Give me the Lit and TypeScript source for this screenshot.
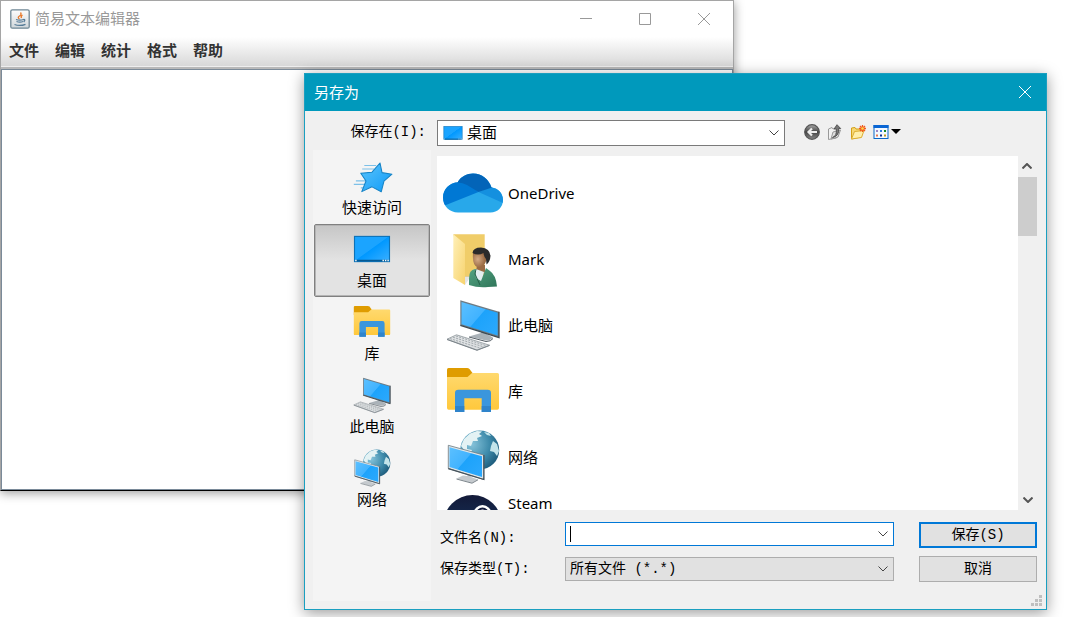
import { LitElement, html, css, svg } from "lit";
import { customElement, state } from "lit/decorators.js";

const art: Record<string, unknown> = {
  quick: svg`
    <defs><linearGradient id="star" x1="0" y1="0" x2="1" y2="1"><stop offset="0" stop-color="#5cc4fb"/><stop offset="1" stop-color="#0f9bf8"/></linearGradient></defs>
    <g stroke="#7cc0e8" stroke-width="1.6" fill="none"><path d="M19 15H36M16 20H33M23 25H30M7 37H22M4 42H20M14 47H18"/></g>
    <path d="M41.4 11.4L44.3 25.2L58.5 27.4L47.1 37.3L43.2 52.6L30 45.5L15.4 52.3L21.4 37.1L14 26L30 24.5Z" fill="url(#star)" stroke="#1583c6" stroke-width="1.5" stroke-linejoin="round"/>`,
  desktop: svg`
    <defs><linearGradient id="desk" x1="0" y1="0" x2="1" y2="1"><stop offset="0" stop-color="#1ba4ff"/><stop offset=".48" stop-color="#1ba4ff"/><stop offset=".5" stop-color="#0098ff"/><stop offset="1" stop-color="#3cb0ff"/></linearGradient></defs>
    <rect x="5" y="12" width="50" height="36" fill="url(#desk)" stroke="#0c72b8" stroke-width="1.6"/>
    <path d="M6 46.5H54" stroke="#075a93" stroke-width="2.2"/><path d="M6 46.5h2M45 46.5h2M48.500 46.500h2M52 46.500h2" stroke="#fff" stroke-width="2"/>`,
  library: svg`
    <defs><linearGradient id="lib" x1="0" y1="0" x2="0" y2="1"><stop offset="0" stop-color="#ffd96e"/><stop offset="1" stop-color="#ffc83c"/></linearGradient></defs>
    <path d="M5.500 7H24q1.500 0 2.500 1l3 4-3 8H4V8.500Q4 7 5.500 7z" fill="#df9c00"/>
    <path d="M4 16H24.500L29 12H54.500Q56 12 56 13.500V47q0 1.700-1.700 1.700H5.700Q4 48.700 4 47z" fill="url(#lib)"/>
    <path d="M12 51V32q0-3.300 3.300-3.300H44.700Q48 28.700 48 32V51H38.700V37.300H21.300V51z" fill="#3a96dd"/>
    <path d="M12 45h9.300v6H12zM38.700 45H48v6h-9.300z" fill="#2f84cb"/>`,
  computer: svg`
    <defs><linearGradient id="pc" x1="0" y1="0" x2="1" y2=".8"><stop offset="0" stop-color="#5cc0ff"/><stop offset=".5" stop-color="#41b3ff"/><stop offset=".52" stop-color="#1da3fb"/><stop offset="1" stop-color="#2aa8fd"/></linearGradient></defs>
    <path d="M26 41.500L38 38l1-3 4.500 1v3l6.500 3.500q-2 3-7 3z" fill="#aab2b8"/><path d="M26 42L43 46.500q5 0 7-3" stroke="#555e66" fill="none"/>
    <path d="M17.300 5.300L56 16.700V42.500L17.300 30.300z" fill="#6d7b84"/>
    <path d="M18.500 7L54.700 17.700V40.500L18.500 29.200z" fill="url(#pc)"/>
    <path d="M56 16.700V42.500L17.300 30.300" fill="none" stroke="#3e4a52" stroke-width="1.300"/>
    <path d="M4 44.200L13.500 39.800L46.500 50.200L34 55z" fill="#dde0e2" stroke="#8d959b" stroke-width=".8"/>
    <path d="M7 43.600L38 53.400M10 42.200L41 52M13 41L43.500 50.800" stroke="#a3aaae" stroke-width="1" stroke-dasharray="2 1.200"/>
    <path d="M4 44.500L34 55.300L46.500 50.500" fill="none" stroke="#7b848a"/>`,
  network: svg`
    <defs><radialGradient id="globe" cx=".3" cy=".35" r=".75"><stop offset="0" stop-color="#86c3da"/><stop offset=".6" stop-color="#3e8bab"/><stop offset="1" stop-color="#1e5c7c"/></radialGradient>
    <linearGradient id="net" x1="0" y1="0" x2="1" y2=".8"><stop offset="0" stop-color="#5cc0ff"/><stop offset=".5" stop-color="#41b3ff"/><stop offset=".52" stop-color="#1da3fb"/><stop offset="1" stop-color="#2aa8fd"/></linearGradient></defs>
    <circle cx="36.700" cy="23" r="19.500" fill="url(#globe)"/>
    <path d="M18 19L21 12L27 6.500L34 4L39 4.500L36 7L39 9L34 11L35 14L30 14L28 19L24 18L24 22L29 23L27 27L22 24z" fill="#e3f2f4"/>
    <path d="M41 5L46 6L48 9L44 8zM50 14L54 17L56 24L54 29L51 25L47 24L48 19zM29 25l3 1-1 3-3-2z" fill="#c3e4ea"/>
    <path d="M13.500 51.500L20 48.500l4 .5 1-3 3 1v3l7 2.500-6 3.500z" fill="#c5cace"/><path d="M13.500 52L29 56.200L35 52.800" stroke="#7c858b" fill="none"/>
    <path d="M5.300 18.300L40.700 28V52.500L5.300 41.500z" fill="#dfe6e9" stroke="#6b7880" stroke-width=".8"/>
    <path d="M6.500 20.200L39 29.200V50L6.500 40z" fill="url(#net)"/><path d="M40.900 28V52.500L5.300 41.600" fill="none" stroke="#45525b" stroke-width="1.200"/>`,
  onedrive: svg`
    <defs><clipPath id="cloud"><path d="M14.500 19.500C18 13.500 24 10.500 30 10.500C39 10.500 46 16.500 48.500 24.500C55 25 60 30.500 60 37C60 44 54.500 49.500 47.500 49.500H15C6.500 49.500 0 43 0 34.500C0 26.500 6.500 19.500 14.500 19.500z"/></clipPath></defs>
    <g clip-path="url(#cloud)"><path d="M0 0H60V60H0z" fill="#28a8ea"/><path d="M0 10H14L35.500 29L3 42H0z" fill="#0078d4"/>
    <path d="M35.500 29L47 24L60 22V40z" fill="#1490df"/><path d="M11 8H52V23.500L35.500 29L24 22Q18 18.500 12 19.700z" fill="#0364b8"/></g>`,
  user: svg`
    <defs><linearGradient id="flap" x1="0" y1="0" x2="1" y2="1"><stop offset="0" stop-color="#fff0b8"/><stop offset="1" stop-color="#f7d36e"/></linearGradient>
    <radialGradient id="face" cx=".35" cy=".5"><stop offset="0" stop-color="#d5ab85"/><stop offset="1" stop-color="#9a6b44"/></radialGradient>
    <linearGradient id="coat" x1="0" y1="0" x2="1" y2="1"><stop offset="0" stop-color="#55a583"/><stop offset="1" stop-color="#2f7559"/></linearGradient></defs>
    <path d="M10.300 5.300H41.700V48H20z" fill="#f0cd69"/><path d="M10.300 5.300L22 15V56L10.300 49z" fill="url(#flap)"/><path d="M22 56l4-6V47H22z" fill="#ccc" opacity=".5"/>
    <path d="M34 36h8v7l-5 5-4-5z" fill="#9a6b44"/>
    <path d="M33 40l-3 1v14h8l3-12z" fill="#e4eef0"/>
    <path d="M32 40Q26 41 26 49V56Q35 59 45 58L54 57.500Q53 46 47 42L43 39L38 52L33 49z" fill="url(#coat)"/><path d="M33 40L32 45L37 56" stroke="#26624a" fill="none"/>
    <path d="M30 24Q29 37 35 38.500Q41 39 44 30L43 22z" fill="url(#face)"/>
    <path d="M29.500 24Q30 18.500 38 18.500Q47 19 47.500 27Q47 33 43.500 35.500L43 30Q41 28 40.500 24Q35 27 29.500 24z" fill="#2b2b2b"/>`,
  steam: svg`
    <defs><linearGradient id="steam" x1="0" y1="0" x2="0" y2="1"><stop offset="0" stop-color="#131a38"/><stop offset="1" stop-color="#17406f"/></linearGradient></defs>
    <circle cx="29.500" cy="31" r="29" fill="url(#steam)"/><circle cx="39.500" cy="21" r="9" fill="#fff"/><circle cx="39.500" cy="21" r="6.500" fill="#131b3c"/><circle cx="39.500" cy="21" r="4.500" fill="#fff"/>`,
};

const picture = (name: string, cls: string) =>
  html`<svg class=${cls} viewBox="0 0 60 60" aria-hidden="true">${art[name]}</svg>`;

const chevron = html`<svg class="chevron" viewBox="0 0 10 6" aria-hidden="true"><path d="M.5 .5L5 5L9.500 .5" /></svg>`;

const cross = html`<svg class="sign" viewBox="0 0 12 12" aria-hidden="true"><path d="M0 0L12 12M12 0L0 12" /></svg>`;

@customElement("app-root")
export class AppRoot extends LitElement {
  @state() private place = "desktop";

  private menus = ["文件", "编辑", "统计", "格式", "帮助"];
  private places = [
    { id: "quick", name: "快速访问" },
    { id: "desktop", name: "桌面" },
    { id: "library", name: "库" },
    { id: "computer", name: "此电脑" },
    { id: "network", name: "网络" },
  ];
  private entries = [
    { id: "onedrive", name: "OneDrive" },
    { id: "user", name: "Mark" },
    { id: "computer", name: "此电脑" },
    { id: "library", name: "库" },
    { id: "network", name: "网络" },
    { id: "steam", name: "Steam", tall: true },
  ];

  static styles = css`
    :host {
      display: block;
      position: relative;
      height: 100vh;
      overflow: hidden;
      background: #fff;
      color: #000;
      font: 15px/20px "Noto Sans", "Noto Sans CJK SC", sans-serif;
    }
    * { box-sizing: border-box; }
    button, input, select, textarea {
      margin: 0;
      padding: 0;
      border: 0;
      border-radius: 0;
      outline: 0;
      background: none;
      color: inherit;
      font: inherit;
      appearance: none;
      min-width: 0;
    }
    .window { position: absolute; display: flex; flex-direction: column; }
    .titlebar { display: flex; align-items: stretch; }
    .caption { flex: 1; margin: 0; font: inherit; align-self: center; }
    .controls { display: flex; }
    .winbtn { display: grid; place-items: center; }
    .sign { width: 12px; height: 12px; fill: none; stroke: currentColor; overflow: visible; }

    .editor {
      inset: 0 332px 126px 0;
      border: 1px solid #a5a5a5;
      border-bottom-color: #000;
      background: #fff;
      box-shadow: 0 2px 10px rgba(0, 0, 0, 0.4);
    }
    .editor .titlebar { height: 36px; padding-left: 9px; gap: 5px; color: #999; }
    .editor .caption { padding-bottom: 2px; }
    .editor .winbtn { width: 59px; }
    .java { width: 20px; height: 20px; align-self: center; }
    .menubar {
      display: flex;
      height: 30px;
      background: linear-gradient(#fff, #d8d8d8);
      border-bottom: 1px solid #eee;
      color: #333;
      font-weight: 700;
    }
    .menu { padding: 0 8px 4px; }
    .page {
      flex: 1;
      display: flex;
      border-top: 2px solid #b8b8b8;
    }
    .paper { flex: 1; resize: none; padding: 4px; border: 1px solid #7a8a99; background: #fff; }

    .dialog {
      inset: 73px 19px 7px 304px;
      border: 1px solid #1a9fc0;
      background: #f0f0f0;
      box-shadow: 0 3px 14px rgba(0, 0, 0, 0.4);
    }
    .dialog .titlebar { height: 37px; padding: 0 0 2px 9px; background: #0099bc; color: #fff; }
    .dialog .winbtn { width: 42px; }
    .body {
      flex: 1;
      min-height: 0;
      display: grid;
      grid-template: 26px minmax(0, 1fr) / 118px minmax(0, 1fr);
      gap: 4px 6px;
      padding: 9px 9px 8px 8px;
    }
    .song { font: 14px/20px "Liberation Mono", "Noto Sans CJK SC", monospace; }
    .looklabel { justify-self: end; align-self: center; padding: 0 5px 2px 0; }
    .lookrow { display: flex; align-items: center; gap: 19px; }
    .combo { display: flex; align-items: center; border: 1px solid #7a7a7a; background: #fff; }
    .lookin { width: 58%; height: 26px; padding-left: 4px; gap: 3px; }
    .lookin .field { padding-bottom: 2px; }
    .field { flex: 1; height: 100%; }
    .mini { width: 22px; height: 22px; }
    .chevron { width: 10px; height: 6px; margin: 0 5px; fill: none; stroke: #444; pointer-events: none; }
    .tools { display: flex; gap: 7px; align-items: center; padding-bottom: 3px; }
    .tool { height: 18px; display: flex; align-items: center; gap: 2px; }
    .glyph { width: 16px; height: 16px; }
    .drop { width: 10px; height: 5px; }

    .places { background: #f4f4f4; padding: 1px; display: flex; flex-direction: column; }
    .place {
      display: flex;
      flex-direction: column;
      align-items: center;
      height: 73px;
      padding-top: 3px;
      border: 1px solid transparent;
    }
    .place.on {
      border-color: #808080;
      border-radius: 2px;
      background: linear-gradient(#c6c6c6, #e3e3e3 50%);
      box-shadow: inset 0 0 0 1px #b4b4b4;
    }
    .placeicon { width: 42px; height: 42px; }

    .main { display: flex; flex-direction: column; min-width: 0; padding: 6px 0 19px; }
    .files { flex: 1; min-height: 0; display: flex; }
    .list { flex: 1; margin: 0; padding: 4px 6px 0; list-style: none; overflow: hidden; background: #fff; }
    .entry { display: flex; align-items: center; gap: 5px; height: 66px; }
    .entry.tall { align-items: flex-start; padding-top: 3px; }
    .big { width: 60px; height: 60px; }
    .scroll { width: 19px; display: flex; flex-direction: column; }
    .arrow { height: 21px; display: grid; place-items: center; }
    .arrow .chevron { stroke: #555; stroke-width: 2; margin: 0; }
    .flip { transform: rotate(180deg); }
    .track { flex: 1; }
    .thumb { height: 19%; background: #cdcdcd; }

    .form {
      display: grid;
      grid-template: 26px 26px / 125px minmax(0, 1fr) 118px;
      gap: 8px 0;
      align-items: center;
      padding-left: 3px;
      margin-top: 12px;
    }
    .form .combo { height: 24px; margin-right: 25px; padding-left: 4px; }
    .form .name { border-color: #0078d7; align-self: start; }
    .form .namelabel { align-self: end; }
    .form .type { border-color: #adadad; background: #e1e1e1; }
    .caret { width: 1px; height: 16px; background: #000; }
    .name .field { caret-color: transparent; }
    .push { height: 26px; border: 1px solid #adadad; background: #e1e1e1; }
    .push.primary { border: 2px solid #0078d7; }
    .grip { position: absolute; right: 3px; bottom: 2px; width: 12px; height: 12px; fill: #bfbfbf; }
  `;

  private renderEditor() {
    return html`<section class="window editor" aria-label="简易文本编辑器">
      <header class="titlebar">
        <svg class="java" viewBox="0 0 20 20" aria-hidden="true">
          <defs><linearGradient id="cup" x1="0" y1="0" x2="0" y2="1"><stop offset="0" stop-color="#fdfdfd" /><stop offset="1" stop-color="#cfd6da" /></linearGradient></defs>
          <rect x=".8" y=".8" width="18.400" height="18.400" rx="1.500" fill="url(#cup)" stroke="#6f8795" stroke-width="1.300" />
          <path d="M10.500 3.500Q12 5.500 9.500 7T9.500 10M12.500 6Q10.500 7 11.500 9" fill="none" stroke="#e8782a" stroke-width="1.300" />
          <path d="M6 10.500Q10 11.800 13.500 10.500M6.500 12.500Q10 13.600 13 12.500M13.500 10.500Q16 10.500 13.700 13M4.500 15.500Q10 17.500 15.500 15.300" fill="none" stroke="#557b97" stroke-width="1.300" />
        </svg>
        <h1 class="caption">简易文本编辑器</h1>
        <div class="controls">
          <button class="winbtn" aria-label="最小化"><svg class="sign" viewBox="0 0 12 12"><path d="M0 5.500H12" /></svg></button>
          <button class="winbtn" aria-label="最大化"><svg class="sign" viewBox="0 0 12 12"><path d="M.5 .5H11.500V11.500H.5z" /></svg></button>
          <button class="winbtn" aria-label="关闭">${cross}</button>
        </div>
      </header>
      <nav class="menubar">${this.menus.map((m) => html`<button class="menu">${m}</button>`)}</nav>
      <div class="page"><textarea class="paper" aria-label="文本"></textarea></div>
    </section>`;
  }

  private renderTools() {
    return html`<div class="tools">
      <button class="tool" aria-label="后退">
        <svg class="glyph" viewBox="0 0 16 16">
          <defs><linearGradient id="ball" x1="0" y1="0" x2="0" y2="1"><stop offset="0" stop-color="#aaa" /><stop offset=".5" stop-color="#444" /><stop offset="1" stop-color="#888" /></linearGradient></defs>
          <circle cx="8" cy="8" r="7.300" fill="url(#ball)" stroke="#555" stroke-width="1.200" /><path d="M13 8H5M8 4.500L4.500 8L8 11.500" fill="none" stroke="#eee" stroke-width="2.200" />
        </svg>
      </button>
      <button class="tool" aria-label="向上一级">
        <svg class="glyph" viewBox="0 0 16 16">
          <path d="M1.500 5L5 3.500L6 5L10 4L12 8L9.500 14L1.500 15.500z" fill="#f2f2f2" stroke="#999" /><path d="M4 15L6 8L13.500 6L11 13z" fill="#e0e0e0" stroke="#999" />
          <path d="M5.500 13.500Q10 12 9.300 5H7L10 .7L13.700 4.500H11.700Q12.500 12 5.500 13.500z" fill="#777" stroke="#444" stroke-width=".8" />
        </svg>
      </button>
      <button class="tool" aria-label="新建文件夹">
        <svg class="glyph" viewBox="0 0 16 16">
          <path d="M1.500 15V4L5 3.500L6 5H11V13z" fill="#f7d873" stroke="#d3a017" /><path d="M1.500 15L4.500 7.500L14 6.500L11.500 13.500z" fill="#ffefaa" stroke="#dcae32" />
          <path d="M12.500 1V8M9 4.500H16M10 2L15 7M15 2L10 7" stroke="#f25a1d" stroke-width="1.300" /><circle cx="12.500" cy="4.500" r="1.300" fill="#ffd84d" />
        </svg>
      </button>
      <button class="tool" aria-label="查看">
        <svg class="glyph" viewBox="0 0 16 16">
          <rect x="1" y="1.500" width="14" height="13" fill="#f4f9ff" stroke="#0a66c8" /><path d="M.5 1H15.500V4H.5z" fill="#0a66d4" />
          <path d="M3 6h2v2H3z" fill="#9a86c8" /><path d="M7 6h2v2H7z" fill="#2d7de0" /><path d="M11 6h2v2h-2z" fill="#128a2c" />
          <path d="M3 10.500h2v2H3z" fill="#e77850" /><path d="M7 10.500h2v2H7z" fill="#0d2f92" /><path d="M11 10.500h2v2h-2z" fill="#c29a1e" />
        </svg>
        <svg class="drop" viewBox="0 0 10 5"><path d="M0 0H10L5 5z" /></svg>
      </button>
    </div>`;
  }

  private renderDialog() {
    return html`<section class="window dialog" role="dialog" aria-label="另存为">
      <header class="titlebar">
        <h2 class="caption">另存为</h2>
        <button class="winbtn" aria-label="关闭">${cross}</button>
      </header>
      <div class="body">
        <label class="looklabel song" for="lookin">保存在(I):</label>
        <div class="lookrow">
          <div class="combo lookin">
            ${picture("desktop", "mini")}
            <select id="lookin" class="field"><option>桌面</option></select>
            ${chevron}
          </div>
          ${this.renderTools()}
        </div>
        <nav class="places">
          ${this.places.map(
            (p) => html`<button class="place ${p.id === this.place ? "on" : ""}" @click=${() => (this.place = p.id)}>
              ${picture(p.id, "placeicon")}<span>${p.name}</span>
            </button>`
          )}
        </nav>
        <div class="main">
          <div class="files">
            <ul class="list">
              ${this.entries.map(
                (e) => html`<li class="entry ${e.tall ? "tall" : ""}">${picture(e.id, "big")}<span>${e.name}</span></li>`
              )}
            </ul>
            <div class="scroll">
              <button class="arrow flip" aria-label="向上滚动">${chevron}</button>
              <div class="track"><div class="thumb"></div></div>
              <button class="arrow" aria-label="向下滚动">${chevron}</button>
            </div>
          </div>
          <form class="form" @submit=${(e: Event) => e.preventDefault()}>
            <label class="namelabel song" for="filename">文件名(N):</label>
            <div class="combo name"><span class="caret"></span><input id="filename" class="field" type="text" />${chevron}</div>
            <button class="push primary song" type="submit">保存(S)</button>
            <label class="song" for="filetype">保存类型(T):</label>
            <div class="combo type">
              <select id="filetype" class="field song"><option>所有文件 (*.*)</option></select>
              ${chevron}
            </div>
            <button class="push song" type="button">取消</button>
          </form>
        </div>
      </div>
      <svg class="grip" viewBox="0 0 12 12" aria-hidden="true">
        <path d="M8 0h3v3h-3zM4 4h3v3h-3zM8 4h3v3h-3zM0 8h3v3h-3zM4 8h3v3h-3zM8 8h3v3h-3z" />
      </svg>
    </section>`;
  }

  render() {
    return html`${this.renderEditor()}${this.renderDialog()}`;
  }
}
